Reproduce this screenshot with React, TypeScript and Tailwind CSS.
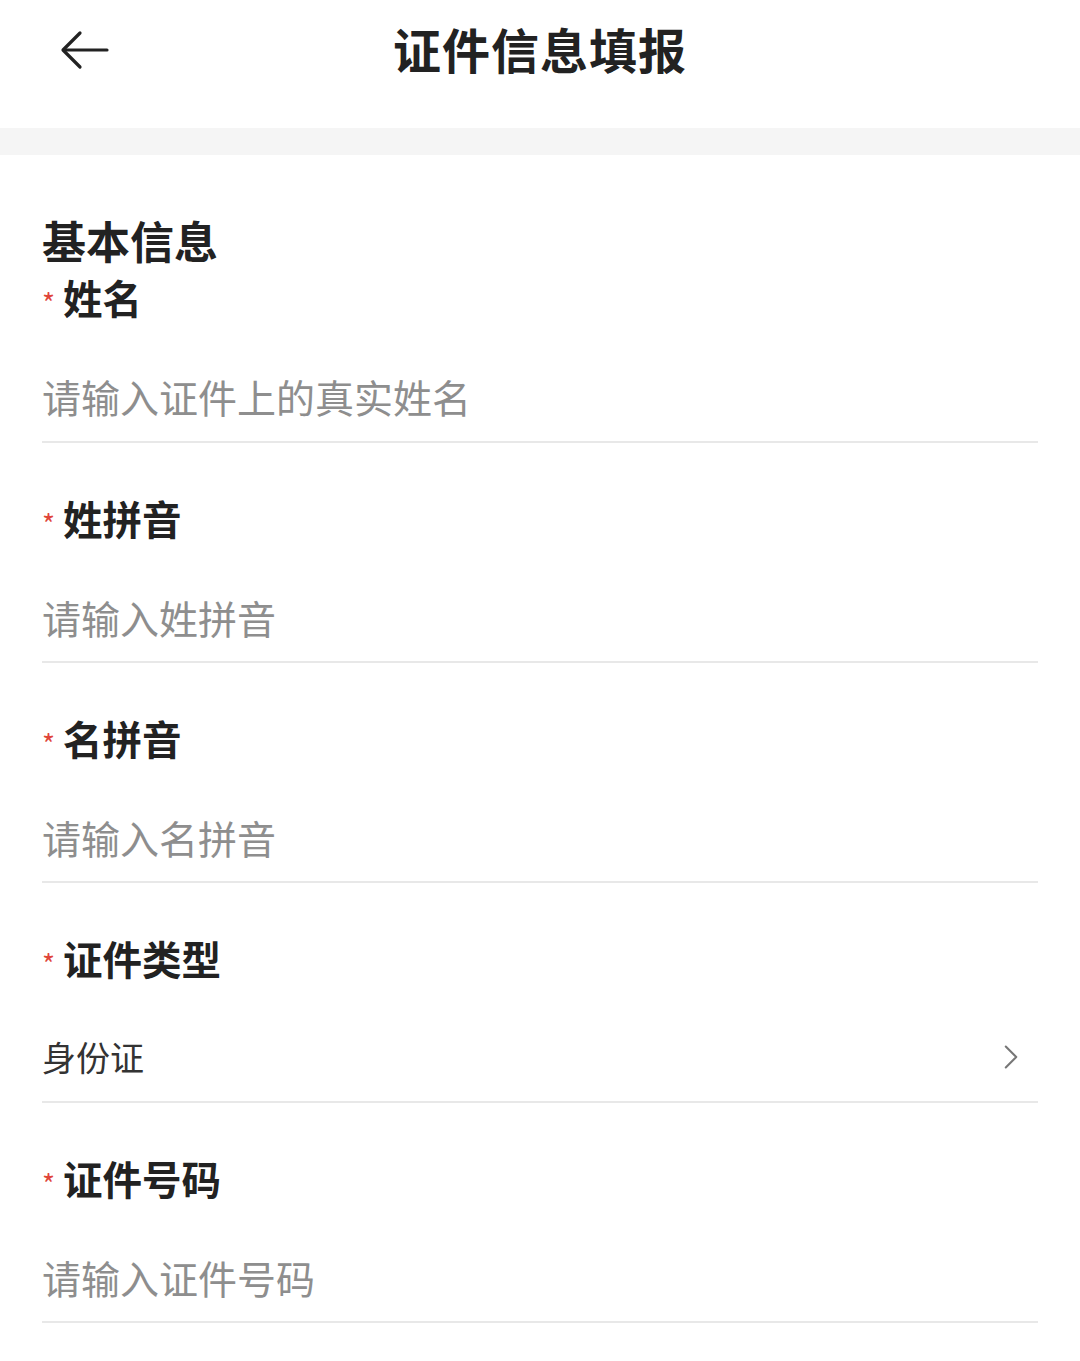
import { ChevronRight } from "lucide-react";

interface Field { label: string; placeholder?: string; value?: string; select?: boolean; }

const fields: Field[] = [
  { label: "姓名", placeholder: "请输入证件上的真实姓名" },
  { label: "姓拼音", placeholder: "请输入姓拼音" },
  { label: "名拼音", placeholder: "请输入名拼音" },
  { label: "证件类型", value: "身份证", select: true },
  { label: "证件号码", placeholder: "请输入证件号码" },
];

const font = "font-['Noto_Sans_CJK_SC','Noto_Sans',sans-serif]";

export default function App() {
  return (
    <div className={`min-h-screen bg-white ${font}`}>
      {/* Header */}
      <div className="h-[128px] pb-[32px] flex items-center relative">
        <button className="absolute left-[60px] top-[28px] w-[50px] h-[44px] flex items-center justify-center">
          <svg width="50" height="40" viewBox="0 0 50 40" fill="none" stroke="#222" strokeWidth="3.2" strokeLinecap="round" strokeLinejoin="round">
            <path d="M47 20H4" />
            <path d="M20 3L3 20L20 37" />
          </svg>
        </button>
        <h1 className="w-full text-center text-[48px] leading-[56px] font-bold text-[#222] tracking-[1px]">证件信息填报</h1>
      </div>

      <div className="h-[27px] bg-[#f5f5f5]" />

      {/* Form */}
      <div className="px-[42px] pt-[60px]">
        <h2 className="text-[44px] leading-[50px] font-bold text-[#222]">基本信息</h2>

        {fields.map((f, i) => (
          <div
            key={f.label}
            className={`border-b-2 border-[#e8e8e8] ${i === 0 ? "pt-[12px] pb-[23px]" : "pt-[55px] pb-[22px]"}`}
          >
            <div className="h-[40px] flex items-center">
              <span className="text-[28px] leading-none text-[#e0453a] mt-[10px] mr-[8px]">*</span>
              <span className="text-[39.5px] leading-[40px] font-bold text-[#222]">{f.label}</span>
            </div>
            {f.select ? (
              <div className="mt-[57px] h-[44px] flex items-center justify-between pr-[6px]">
                <span className="text-[34px] leading-[44px] text-[#333]">{f.value}</span>
                <ChevronRight size={42} strokeWidth={1.2} color="#777" />
              </div>
            ) : (
              <input
                className="mt-[57px] block w-full h-[44px] text-[39px] leading-[44px] bg-transparent outline-none text-[#333] placeholder:text-[#8e8e8e]"
                placeholder={f.placeholder}
              />
            )}
          </div>
        ))}
      </div>
    </div>
  );
}
